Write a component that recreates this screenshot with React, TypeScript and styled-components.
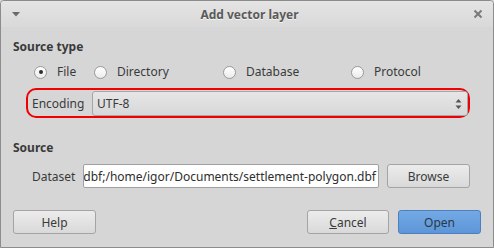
import React from 'react';
import styled, { createGlobalStyle } from 'styled-components';

const GlobalStyle = createGlobalStyle`
  html, body {
    margin: 0;
    padding: 0;
    background: #d6d6d6;
  }
  body {
    font-family: "Noto Sans", "Open Sans", sans-serif;
    font-size: 12px;
    color: #3a3a3a;
  }
`;

const Window = styled.div`
  width: 494px;
  height: 248px;
  box-sizing: border-box;
  border: 1px solid #8c8c8c;
  border-radius: 4px 4px 0 0;
  background: #d6d6d6;
  display: flex;
  flex-direction: column;
  overflow: hidden;
`;

const TitleBar = styled.div`
  height: 26px;
  flex: none;
  display: flex;
  align-items: center;
  padding: 0 10px 0 11px;
  background: linear-gradient(#e4e4e4, #d9d9d9);
`;

const Title = styled.div`
  flex: 1;
  text-align: center;
  font-weight: bold;
  color: #5a5a5a;
  text-shadow: 0 1px 0 rgba(255, 255, 255, 0.7);
  margin-left: 6px;
`;

const Body = styled.div`
  flex: 1;
  display: flex;
  flex-direction: column;
  padding: 12px 0 0 12px;
`;

const Heading = styled.div<{ $gap?: number }>`
  font-weight: bold;
  line-height: 16px;
  margin-top: ${(p) => p.$gap ?? 0}px;
`;

const RadioGrid = styled.div`
  display: grid;
  grid-template-columns: 60px 129px 128px 1fr;
  margin: 9px 0 0 21px;
  line-height: 16px;
`;

const RadioItem = styled.label`
  display: flex;
  align-items: center;
  gap: 10px;
`;

const RadioCircle = styled.span<{ $checked?: boolean }>`
  width: 13px;
  height: 13px;
  box-sizing: border-box;
  border-radius: 50%;
  border: 1px solid #9a9a9a;
  background: linear-gradient(#ffffff, #ececec);
  display: flex;
  align-items: center;
  justify-content: center;
  &::after {
    content: '';
    width: 4px;
    height: 4px;
    border-radius: 50%;
    background: ${(p) => (p.$checked ? '#2e2e2e' : 'transparent')};
  }
`;

const EncodingFrame = styled.div`
  margin: 8px 0 0 13px;
  width: 444px;
  height: 30px;
  box-sizing: border-box;
  border: 2px solid #f00000;
  border-radius: 10px;
  display: flex;
  align-items: center;
  padding: 1px 0 0 4px;
`;

const FieldLabel = styled.span<{ $width: number }>`
  width: ${(p) => p.$width}px;
  flex: none;
`;

const Combo = styled.div`
  flex: 1;
  height: 25px;
  box-sizing: border-box;
  border: 1px solid #a6a6a6;
  border-radius: 3px;
  background: linear-gradient(#e6e6e6, #d8d8d8);
  display: flex;
  align-items: center;
  justify-content: space-between;
  padding: 0 5px 0 4px;
`;

const Spinner = styled.svg`
  display: block;
`;

const DatasetRow = styled.div`
  margin: 8px 0 0 19px;
  width: 438px;
  height: 24px;
  display: flex;
  align-items: center;
`;

const PathField = styled.div`
  width: 296px;
  height: 24px;
  box-sizing: border-box;
  border: 1px solid #a0a0a0;
  border-radius: 2px;
  background: #ffffff;
  color: #2e2e2e;
  display: flex;
  align-items: center;
  justify-content: flex-end;
  overflow: hidden;
  white-space: nowrap;
  padding-right: 2px;
  margin-right: 8px;
`;

const Button = styled.button<{ $primary?: boolean; $width?: number }>`
  width: ${(p) => p.$width ?? 83}px;
  height: 24px;
  box-sizing: border-box;
  font: inherit;
  color: ${(p) => (p.$primary ? '#283848' : '#3a3a3a')};
  border: 1px solid ${(p) => (p.$primary ? '#4a7fc0' : '#a4a4a4')};
  border-radius: 3px;
  background: ${(p) =>
    p.$primary ? 'linear-gradient(#73a9e4, #5d96d8)' : 'linear-gradient(#ececec, #d9d9d9)'};
  padding: 0;
  flex: none;
`;

const ButtonRow = styled.div`
  margin: 22px 12px 0 0;
  display: flex;
  align-items: center;
  gap: 9px;
`;

const Spacer = styled.div`
  flex: 1;
`;

const Mnemonic = styled.span`
  text-decoration: underline;
`;

const App: React.FC = () => (
  <>
    <GlobalStyle />
    <Window>
      <TitleBar>
        <svg width="8" height="5" viewBox="0 0 8 5">
          <path d="M0 0 H8 L4 4.5 Z" fill="#6a6a6a" />
        </svg>
        <Title>Add vector layer</Title>
        <svg width="10" height="10" viewBox="0 0 10 10">
          <path d="M1.5 1.5 L8.5 8.5 M8.5 1.5 L1.5 8.5" stroke="#7a7a7a" strokeWidth="2" />
        </svg>
      </TitleBar>
      <Body>
        <Heading>Source type</Heading>
        <RadioGrid>
          <RadioItem>
            <RadioCircle $checked />
            File
          </RadioItem>
          <RadioItem>
            <RadioCircle />
            Directory
          </RadioItem>
          <RadioItem>
            <RadioCircle />
            Database
          </RadioItem>
          <RadioItem>
            <RadioCircle />
            Protocol
          </RadioItem>
        </RadioGrid>
        <EncodingFrame>
          <FieldLabel $width={60}>Encoding</FieldLabel>
          <Combo>
            <span>UTF-8</span>
            <Spinner width="7" height="12" viewBox="0 0 7 12">
              <path d="M3.5 1 L6.5 4.5 H0.5 Z M0.5 7.5 H6.5 L3.5 11 Z" fill="#555" />
            </Spinner>
          </Combo>
        </EncodingFrame>
        <Heading $gap={22}>Source</Heading>
        <DatasetRow>
          <FieldLabel $width={51}>Dataset</FieldLabel>
          <PathField>dbf;/home/igor/Documents/settlement-polygon.dbf</PathField>
          <Button>Browse</Button>
        </DatasetRow>
        <ButtonRow>
          <Button>Help</Button>
          <Spacer />
          <Button $width={82}>
            <Mnemonic>C</Mnemonic>ancel
          </Button>
          <Button $primary>Open</Button>
        </ButtonRow>
      </Body>
    </Window>
  </>
);

export default App;
